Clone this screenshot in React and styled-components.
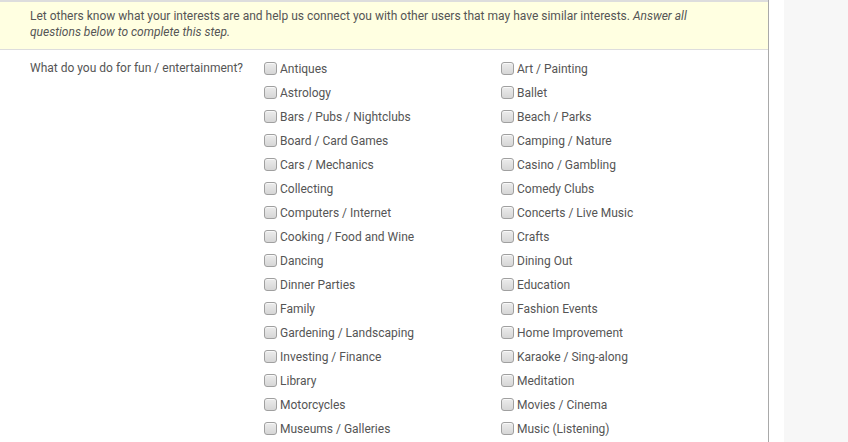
import React from "react";
import styled, { createGlobalStyle } from "styled-components";

const Global = createGlobalStyle`
  html, body { margin: 0; padding: 0; background: #fff; }
  body { font-family: Roboto, "Liberation Sans", Arial, sans-serif; font-size: 12px; color: #555; }
  #root { height: 442px; overflow: hidden; }
`;

const Page = styled.div`
  display: flex;
  height: 442px;
`;

const Panel = styled.div`
  width: 768px;
  border-right: 1px solid #a9a9a9;
  background: #fff;
  flex: none;
`;

const Gutter = styled.div`
  width: 15px;
  flex: none;
  background: #fff;
`;

const Sidebar = styled.div`
  flex: 1;
  background: #f7f7f7;
`;

const Intro = styled.div`
  border-top: 2px solid #dddddd;
  border-bottom: 1px solid #dddddd;
  background: #ffffe1;
  padding: 6px 80px 9px 30px;
  line-height: 16px;
`;

const Em = styled.em`
  font-style: italic;
`;

const FormRow = styled.div`
  display: grid;
  grid-template-columns: 234px 1fr;
  padding: 7px 0 0 30px;
`;

const Question = styled.div`
  line-height: 22px;
`;

const Options = styled.div`
  display: grid;
  grid-template-columns: 237px 237px;
`;

const Option = styled.label`
  display: flex;
  align-items: center;
  height: 24px;
  line-height: 24px;
`;

const Box = styled.input.attrs({ type: "checkbox" })`
  appearance: none;
  -webkit-appearance: none;
  width: 13px;
  height: 13px;
  margin: -2px 3px 0 0;
  border: 1px solid #a0a0a0;
  border-radius: 3px;
  background: linear-gradient(#ececec, #d6d6d6);
  box-shadow: inset 0 1px 0 #f8f8f8;
  box-sizing: border-box;
  flex: none;
`;

const items = [
  ["Antiques", "Art / Painting"],
  ["Astrology", "Ballet"],
  ["Bars / Pubs / Nightclubs", "Beach / Parks"],
  ["Board / Card Games", "Camping / Nature"],
  ["Cars / Mechanics", "Casino / Gambling"],
  ["Collecting", "Comedy Clubs"],
  ["Computers / Internet", "Concerts / Live Music"],
  ["Cooking / Food and Wine", "Crafts"],
  ["Dancing", "Dining Out"],
  ["Dinner Parties", "Education"],
  ["Family", "Fashion Events"],
  ["Gardening / Landscaping", "Home Improvement"],
  ["Investing / Finance", "Karaoke / Sing-along"],
  ["Library", "Meditation"],
  ["Motorcycles", "Movies / Cinema"],
  ["Museums / Galleries", "Music (Listening)"],
];

export default function App() {
  return (
    <>
      <Global />
      <Page>
        <Panel>
          <Intro>
            Let others know what your interests are and help us connect you with other users that may have similar interests.{" "}
            <Em>Answer all questions below to complete this step.</Em>
          </Intro>
          <FormRow>
            <Question>What do you do for fun / entertainment?</Question>
            <Options>
              {items.flat().map((t) => (
                <Option key={t}>
                  <Box />
                  {t}
                </Option>
              ))}
            </Options>
          </FormRow>
        </Panel>
        <Gutter />
        <Sidebar />
      </Page>
    </>
  );
}
